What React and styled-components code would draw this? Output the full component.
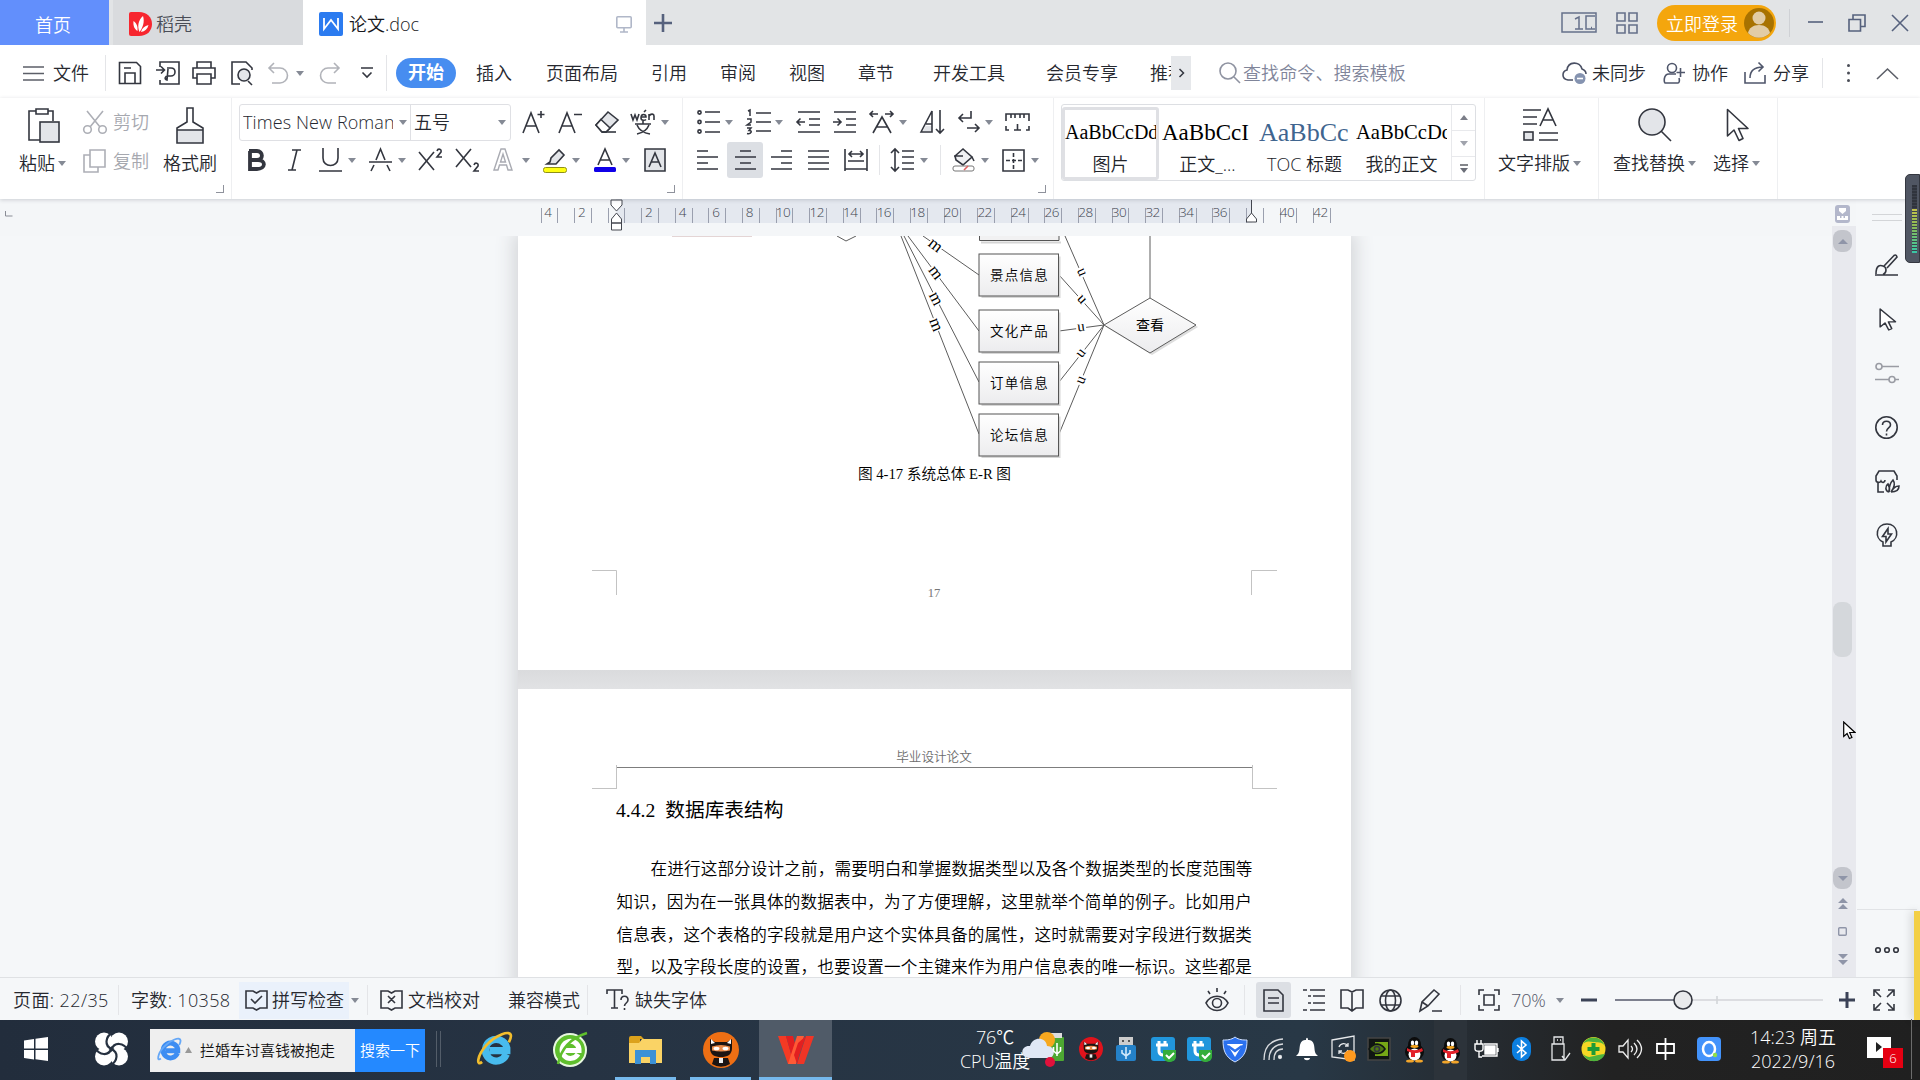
import React from 'react'
import styled, { createGlobalStyle, css } from 'styled-components'

const GlobalStyle = createGlobalStyle`
    * { box-sizing: border-box; }
    body {
        margin: 0;
        overflow: hidden;
        background: #f5f7f9;
        font-family: "Open Sans", "Noto Sans CJK SC", sans-serif;
        font-size: 18px;
        font-weight: 350;
        color: #26282f;
    }
`;

const Screen = styled.div`
    position: relative;
    display: flex;
    flex-direction: column;
    width: 1920px;
    height: 1080px;
    overflow: hidden;
`;

/* line drawing used for every icon */
const Glyph = styled.svg`
    display: block;
    flex: none;
    margin-left: ${p => p.$l || 0}px;
    fill: none;
    stroke: ${p => p.$c || '#33363f'};
    stroke-width: ${p => p.$sw || 1.6};
    overflow: visible;
`;

const Icon = ({ w, h, l, c, sw, children }) => (
    <Glyph width={w} height={h} viewBox={`0 0 ${w} ${h}`} $l={l} $c={c} $sw={sw}>{children}</Glyph>
)

const Caret = styled.i`
    flex: none;
    width: 0;
    height: 0;
    margin-left: ${p => p.$l || 0}px;
    border: 4px solid transparent;
    border-top: 5px solid ${p => p.$c || '#858a95'};
    border-bottom: 0;
`;

const Text = styled.span`
    flex: none;
    width: ${p => p.$w}px;
    margin-left: ${p => p.$l || 0}px;
    font-size: ${p => p.$s || 18}px;
    line-height: 24px;
    white-space: nowrap;
    overflow: ${p => (p.$clip ? 'hidden' : 'visible')};
    color: ${p => p.$c || 'inherit'};
    letter-spacing: ${p => p.$ls || 0}px;
`;

const Rule = styled.i`
    flex: none;
    width: 1px;
    height: ${p => p.$h || 30}px;
    margin-left: ${p => p.$l || 0}px;
    background: ${p => p.$c || '#e4e5e8'};
`;

/* ---------- tab strip ---------- */
const TabBar = styled.header`
    display: flex;
    align-items: center;
    height: 45px;
    flex: none;
    background: #e2e4e6;
`;

const Tab = styled.div`
    display: flex;
    align-items: center;
    flex: none;
    height: 45px;
    width: ${p => p.$w}px;
    margin-left: ${p => p.$l || 0}px;
    padding-left: ${p => p.$p}px;
    padding-top: 3px;
    background: ${p => p.$bg};
    color: ${p => p.$c};
`;

const Login = styled.div`
    display: flex;
    align-items: center;
    width: 119px;
    height: 36px;
    margin-left: 19px;
    padding-left: 9px;
    border-radius: 18px;
    background: #f4a60d;
    color: #fff;
`;

/* ---------- menu ---------- */
const MenuBar = styled.nav`
    display: flex;
    align-items: center;
    flex: none;
    height: 53px;
    padding-top: 3px;
    background: #fff;
`;

const Pill = styled.div`
    flex: none;
    width: 60px;
    height: 30px;
    margin-left: 9px;
    border-radius: 15px;
    background: #478df0;
    color: #fff;
    font-weight: 700;
    line-height: 29px;
    text-align: center;
`;

const More = styled.div`
    display: flex;
    align-items: center;
    justify-content: center;
    flex: none;
    width: 20px;
    height: 34px;
    background: #e6e8eb;
`;

/* ---------- ribbon ---------- */
const Ribbon = styled.section`
    display: flex;
    flex: none;
    height: 101px;
    background: #fff;
    box-shadow: 0 1px 4px rgba(60, 64, 80, 0.22);
    z-index: 1;
`;

const Group = styled.div`
    display: flex;
    position: relative;
    flex: none;
    flex-direction: ${p => (p.$col ? 'column' : 'row')};
    width: ${p => p.$w}px;
    padding-top: 5px;
    border-right: 1px solid #eeeff1;
`;

const Corner = styled.i`
    position: absolute;
    right: 7px;
    bottom: 6px;
    width: 8px;
    height: 8px;
    border: solid #8f929c;
    border-width: 0 1.5px 1.5px 0;
`;

const Stack = styled.div`
    display: flex;
    flex-direction: column;
    flex: none;
    margin-left: ${p => p.$l || 0}px;
    width: ${p => p.$w}px;
`;

const Row = styled.div`
    display: flex;
    align-items: center;
    flex: none;
    height: ${p => p.$h}px;
    padding-left: ${p => p.$p || 0}px;
`;

const FontBox = styled.div`
    display: flex;
    align-items: center;
    flex: none;
    width: 272px;
    height: 37px;
    margin-left: 7px;
    border: 1px solid #dfe0e4;
    border-radius: 3px;
`;

const Active = styled.div`
    display: flex;
    align-items: center;
    justify-content: center;
    flex: none;
    width: ${p => p.$w}px;
    height: 36px;
    margin-left: ${p => p.$l}px;
    border-radius: 3px;
    background: #dcdfe4;
`;

const Gallery = styled.div`
    display: flex;
    width: 415px;
    height: 77px;
    margin-top: 1px;
    margin-left: 7px;
    border: 1px solid #dddfe3;
    border-radius: 3px;
`;

const StyleCard = styled.div`
    flex: none;
    width: 97px;
    height: 73px;
    margin-top: 2px;
    padding-top: 7px;
    text-align: center;
    border: 3px solid ${p => (p.$on ? '#dfe0e4' : 'transparent')};
    border-radius: 3px;
    line-height: 30px;
    color: #22242a;
`;

const Sample = styled.div`
    width: 91px;
    height: 32px;
    overflow: hidden;
    text-align: left;
    white-space: nowrap;
    font-family: "Liberation Serif", serif;
    font-size: ${p => p.$s}px;
    line-height: 31px;
    color: ${p => p.$c || '#000'};
`;

const Spinner = styled.div`
    display: grid;
    grid-template-rows: 25px 26px 1fr;
    place-items: center;
    width: 24px;
    margin-left: auto;
    border-left: 1px solid #e8e9ec;
`;

const SpinCell = styled.div`
    display: grid;
    place-items: center;
    width: 100%;
    height: 100%;
    border-top: ${p => (p.$line ? '1px solid #e8e9ec' : '0')};
`;

const GalleryHold = styled.div`
    display: flex;
    flex: none;
    width: 389px;
`;

/* ---------- ruler ---------- */
const Ruler = styled.div`
    display: flex;
    flex: none;
    height: 37px;
    padding-left: 540.5px;
    padding-top: 9px;
    position: relative;
    background:
        linear-gradient(#e4e8ef, #e4e8ef) 616px 0 / 636px 24px no-repeat,
        #f4f6f8;
`;

const Tick = styled.div`
    display: flex;
    justify-content: center;
    flex: none;
    width: 16.8px;
    height: 15px;
    padding-right: 3px;
    border-left: 1px solid #9a9fae;
    font-size: 13.5px;
    line-height: 9px;
    letter-spacing: -0.5px;
    color: #40444f;
`;

const Stops = styled.svg`
    position: absolute;
    left: 0;
    top: 0;
    fill: #fff;
    stroke: #44474f;
`;

/* ---------- document ---------- */
const Body = styled.main`
    display: flex;
    flex: none;
    height: 741px;
`;

const Canvas = styled.div`
    width: 1832px;
    height: 741px;
    padding-left: 518px;
    overflow: hidden;
    background: #f5f7f9;
`;

const Pages = styled.div`
    width: 833px;
    background: linear-gradient(#dadbdd, #e1e2e4) 0 434px / 100% 19px no-repeat;
    box-shadow: 0 0 18px 4px #d2d4d7;
`;

const Paper = styled.article`
    height: ${p => p.$h}px;
    margin-bottom: 19px;
    background: #fff;
`;

const serif = css`
    font-family: "Liberation Serif", "Noto Sans CJK SC", serif;
`;

const PageHeader = styled.div`
    display: flex;
    justify-content: center;
    align-items: flex-end;
    width: 635px;
    height: 79px;
    margin-left: 98.5px;
    border-bottom: 1.5px solid #7d7d7d;
    padding-bottom: 2px;
    ${serif}
    font-size: 12.6px;
    color: #6d6d6d;
`;

const Crops = styled.div`
    display: flex;
    justify-content: space-between;
    width: 685px;
    height: 24px;
    margin: -3px 0 0 74px;
`;

const Crop = styled.i`
    width: 25px;
    height: 24px;
    border: 0 solid #c3c3c3;
    border-bottom-width: 1px;
    border-right-width: ${p => (p.$r ? 0 : 1)}px;
    border-left-width: ${p => (p.$r ? 1 : 0)}px;
`;

const Heading = styled.h3`
    margin: 8px 0 0 98px;
    ${serif}
    font-size: 19.7px;
    font-weight: 400;
    line-height: 26px;
    color: #000;
    word-spacing: 5px;
`;

const Para = styled.p`
    width: 635px;
    margin: 31px 0 0 98.5px;
    ${serif}
    font-size: 16.6px;
    line-height: 32.8px;
    color: #000;
`;

const Line = styled.span`
    display: block;
    white-space: nowrap;
    text-align: justify;
    text-align-last: justify;
    padding-left: ${p => (p.$indent ? 34 : 0)}px;
    letter-spacing: 0.13px;
`;

/* ---------- right rail ---------- */
const Scroll = styled.div`
    display: flex;
    flex-direction: column;
    align-items: center;
    flex: none;
    width: 24px;
    height: 778px;
    margin-top: -37px;
    padding: 6px 3px 0 0;
    z-index: 0;
    background: linear-gradient(#f4f6f8, #f4f6f8) 0 0 / 24px 27px no-repeat, #e8e9ee;
`;

const Knob = styled.div`
    display: flex;
    align-items: center;
    justify-content: center;
    flex: none;
    width: 19px;
    height: ${p => p.$h}px;
    margin-top: ${p => p.$t}px;
    border-radius: 8px;
    background: ${p => p.$c || '#c3c5cc'};
`;

const Side = styled.aside`
    display: flex;
    flex-direction: column;
    flex: none;
    align-items: center;
    width: 64px;
    height: 778px;
    margin-top: -37px;
    padding-right: 3px;
    background: #f5f7f9;
    z-index: 0;
`;

const SideItem = styled.div`
    display: flex;
    align-items: center;
    justify-content: center;
    flex: none;
    width: 60px;
    height: 54px;
`;

const Grip = styled.div`
    width: 30px;
    height: 7px;
    margin: 15px 0 17px;
    border: solid #d3d5d8;
    border-width: 1.5px 0;
`;

const SideFoot = styled(SideItem)`
    height: 68px;
    margin-top: auto;
    padding-top: 12px;
    border-top: 1px solid #e1e3e6;
`;

const Meter = styled.div`
    position: absolute;
    z-index: 2;
    right: 0;
    top: 174px;
    width: 15px;
    height: 89px;
    padding: 10px 2px 9px 6px;
    border-radius: 5px 0 0 5px;
    border: 1px solid #343740;
    background: #505663;
`;

const Bars = styled.div`
    height: 100%;
    background:
        repeating-linear-gradient(transparent 0 2px, #3c414c 2px 3px),
        linear-gradient(#30343d 0 34%, #c8c34a 34%, #8cba55 60%, #37c6a7);
`;

const Peek = styled.div`
    position: absolute;
    z-index: 2;
    right: 0;
    top: 911px;
    width: 6px;
    height: 109px;
    background: #f3cf45;
    box-shadow: -3px 0 8px rgba(0, 0, 0, 0.15);
`;

const Pointer = styled.svg`
    position: absolute;
    z-index: 3;
    left: 1843px;
    top: 721px;
`;

/* ---------- status bar ---------- */
const Status = styled.footer`
    display: flex;
    align-items: center;
    flex: none;
    height: 43px;
    padding-top: 2px;
    border-top: 1px solid #dfe1e4;
    background: #f5f7f9;
`;

const Check = styled.div`
    display: flex;
    align-items: center;
    flex: none;
    width: 110px;
    height: 37px;
    margin-left: 7px;
    padding-left: 6px;
    background: #eaf1fb;
`;

/* ---------- taskbar ---------- */
const Taskbar = styled.footer`
    display: flex;
    align-items: center;
    flex: none;
    height: 60px;
    padding-bottom: 2px;
    background: linear-gradient(90deg, #222d3c 0, #263343 30%, #283846 68%, #252a2f 78%, #222 84%, #202020);
    color: #fff;
`;

const SearchBox = styled.div`
    display: flex;
    align-items: center;
    flex: none;
    width: 275px;
    height: 43px;
    margin: 2px 0 0 22px;
    padding-left: 8px;
    background: #efefef;
    color: #111;
`;

const Go = styled.div`
    flex: none;
    width: 70px;
    height: 43px;
    margin-left: auto;
    background: #2489ff;
    color: #fff;
    font-size: 15px;
    line-height: 42px;
    text-align: center;
`;

const TaskApp = styled.div`
    display: flex;
    align-items: center;
    justify-content: center;
    flex: none;
    width: ${p => p.$w}px;
    height: 60px;
    margin-left: ${p => p.$l}px;
    margin-bottom: -2px;
    padding-top: ${p => (p.$open ? 2 : 0)}px;
    border-bottom: ${p => (p.$open ? '3px solid #76b9ed' : '0')};
    background: ${p => p.$bg || 'transparent'};
`;

const Two = styled.div`
    flex: none;
    width: ${p => p.$w}px;
    margin-left: ${p => p.$l}px;
    font-size: 18px;
    line-height: 24px;
    text-align: center;
    white-space: nowrap;
    letter-spacing: ${p => p.$ls || 0}px;
`;

const tabs = [
    ['插入', 20, 36], ['页面布局', 34, 72], ['引用', 33, 36], ['审阅', 33, 36], ['视图', 33, 36],
    ['章节', 33, 36], ['开发工具', 39, 72], ['会员专享', 41, 72],
]

const PointerShape = ({ w = 24, h = 34, l, sw }) => (
    <Glyph width={w} height={h} viewBox="0 0 24 34" $l={l} $sw={sw} preserveAspectRatio="none">
        <path d="M1.500 1.500V28l6.500-6 5 10.500 4-2-4.500-10H22z" strokeLinejoin="round" fill="#fff" />
    </Glyph>
)

const TopTabs = () => (
    <TabBar>
        <Tab $w={109} $p={35} $bg="#628ffc" $c="#fff">首页</Tab>
        <Tab $w={190} $l={4} $p={16} $bg="#d9dbde" $c="#4a4d57">
            <Icon w={23} h={24}>
                <path d="M2 0h8c8 0 13 5 13 12s-5 12-13 12H2a2 2 0 0 1-2-2V2a2 2 0 0 1 2-2z" fill="#f7262f" stroke="none" />
                <path d="M10.500 20C8 14 9.500 8 14 4c2 6-.5 12-3.500 16zM8.500 19c-3-2-4.500-5-4-10 3.500 2.500 4.500 6 4 10zM12 20c1-4 3.500-6 7.500-7-1 4-3.500 6.500-7.500 7z" fill="#fff" stroke="none" />
            </Icon>
            <Text $w={36} $l={4}>稻壳</Text>
        </Tab>
        <Tab $w={343} $p={16} $bg="#fff" $c="#17181c">
            <Icon w={24} h={24}>
                <rect width="24" height="24" rx="2" fill="#2b7bf0" stroke="none" />
                <path d="M5 6v11l7-9 7 9V6" stroke="#fff" strokeWidth="1.800" />
            </Icon>
            <Text $w={72} $l={6}>论文.doc</Text>
            <Icon w={16} h={17} l={195} c="#b0b7c8">
                <rect x=".8" y=".8" width="14.400" height="11" rx="1" /><path d="M8 12v4M4 16h8" />
            </Icon>
        </Tab>
        <Icon w={18} h={18} l={8} c="#56617d" sw={2.6}><path d="M9 0v18M0 9h18" /></Icon>
        <Icon w={36} h={21} l={889} c="#66708a" sw={1.5}>
            <path d="M1 1h34v19H1zM34 4h-9v13h9M30 15.500h1M14 7l4-2v12M14 17h8" />
        </Icon>
        <Icon w={22} h={22} l={19} c="#66708a">
            <path d="M1 1h8v8H1zM13 1h8v8h-8zM1 13h8v8H1zM13 13h8v8h-8z" />
        </Icon>
        <Login>
            立即登录
            <Icon w={30} h={30} l={6}>
                <circle cx="15" cy="15" r="15" fill="#a87200" stroke="none" />
                <circle cx="15" cy="10" r="6.500" fill="#e2cca5" stroke="none" />
                <path d="M4 25c1-5 5-8 11-8s10 3 11 8a15 15 0 0 1-22 0z" fill="#e2cca5" stroke="none" />
            </Icon>
        </Login>
        <Rule $h={28} $l={13} $c="#cfd1d5" />
        <Icon w={15} h={18} l={18} c="#56617d"><path d="M0 8h15" /></Icon>
        <Icon w={18} h={18} l={25} c="#56617d"><path d="M1 5.500h11.500V17H1zM5 5V1h12v11.500h-4" /></Icon>
        <Icon w={16} h={16} l={26} c="#56617d"><path d="M0 0l16 16M16 0L0 16" /></Icon>
    </TabBar>
)

const Menu = () => (
    <MenuBar>
        <Icon w={21} h={15} l={23} c="#5c5f68"><path d="M0 1h21M0 7.500h21M0 14h21" /></Icon>
        <Text $w={36} $l={9}>文件</Text>
        <Rule $h={36} $l={16} />
        <Icon w={24} h={24} l={12}>
            <path d="M1.500 1.500h17l4 4v17h-21zM7 22v-10h10v10M6 7h7" />
        </Icon>
        <Icon w={24} h={24} l={14}>
            <path d="M4 6V1h19v22H4v-4M0 9h8M5 5.500L8.500 9 5 12.500M11 7h4c3 0 4 1.500 4 4s-2 4-4 4h-3c-3 0-4 3-1 4l1-11" />
        </Icon>
        <Icon w={24} h={24} l={12}>
            <path d="M5 7V1h14v6M5 17H1V7h22v10h-4M5 13h14v10H5z" />
        </Icon>
        <Icon w={24} h={24} l={15}>
            <path d="M9 23H1V1h14l6 6v2M17 20l4 4" /><circle cx="13" cy="14" r="6" fill="#e3e5e9" />
        </Icon>
        <Icon w={20} h={22} l={13} c="#b1b3b9"><path d="M6 1L1 6l5 5M1 6h11a7.500 7.500 0 0 1 0 15H4" /></Icon>
        <Caret $l={8} />
        <Icon w={20} h={22} l={16} c="#b1b3b9"><path d="M14 1l5 5-5 5M19 6H8a7.500 7.500 0 0 0 0 15h8" /></Icon>
        <Icon w={12} h={12} l={21}><path d="M0 1h12M1.500 5.500L6 10l4.500-4.500" /></Icon>
        <Rule $h={36} $l={13} />
        <Pill>开始</Pill>
        {tabs.map(([name, l, w]) => <Text key={name} $l={l} $w={w}>{name}</Text>)}
        <Text $l={32} $w={21} $clip>推荐</Text>
        <More><Icon w={5} h={8} sw={1.5}><path d="M.5 0l4 4-4 4" /></Icon></More>
        <Icon w={22} h={22} l={28} c="#8f93a1"><circle cx="9" cy="9" r="8" /><path d="M15 15l6 6" /></Icon>
        <Text $w={163} $l={2} $ls={0.1} $c="#80859a">查找命令、搜索模板</Text>
        <Icon w={25} h={22} l={156} c="#4a5064">
            <path d="M11 18H6C-1 17 0 9 5 8 6-1 18-1 20 7c3 1 4 3 4 5" />
            <circle cx="18" cy="16.500" r="5.500" fill="#8593b0" stroke="none" /><path d="M15 16.500h6" stroke="#fff" />
        </Icon>
        <Text $w={54} $l={5}>未同步</Text>
        <Icon w={22} h={22} l={17} c="#4f566b">
            <circle cx="9" cy="6" r="4.500" /><path d="M13 12H6c-6 0-5 9-4 9h13c1 0 2-2 1-5M17.500 6v9M13.500 10.500H22" />
        </Icon>
        <Text $w={36} $l={7}>协作</Text>
        <Icon w={22} h={22} l={16} c="#4f566b">
            <path d="M1 10v11h20v-8M6 16c0-7 4-11 13-11M14.500.5L19 5l-4.500 4.500" />
        </Icon>
        <Text $w={36} $l={7}>分享</Text>
        <Rule $l={13} />
        <Icon w={3} h={18} l={24}>
            <g fill="#4a4d57" stroke="none"><circle cx="1.500" cy="1.500" r="1.500" /><circle cx="1.500" cy="9" r="1.500" /><circle cx="1.500" cy="16.500" r="1.500" /></g>
        </Icon>
        <Icon w={21} h={11} l={27} c="#5c5f68"><path d="M0 11L10.500 1 21 11" /></Icon>
    </MenuBar>
)

const FontRows = () => (
    <>
        <Row $h={38}>
            <FontBox>
                <Text $w={150} $l={3} $ls={0.1} $clip>Times New Roman</Text>
                <Caret $l={6} />
                <Rule $h={35} $l={3} $c="#dfe0e4" />
                <Text $w={36} $l={3}>五号</Text>
                <Caret $l={48} />
            </FontBox>
            <Icon w={24} h={24} l={11}><path d="M1 23L9 3l8 20M4 16h10M19 1v7M15.500 4.500h7" /></Icon>
            <Icon w={24} h={24} l={12}><path d="M1 23L9 3l8 20M4 16h10M16 4.500h8" /></Icon>
            <Icon w={24} h={24} l={13}>
                <path d="M1 15L13 2l10 8L11 22H7z" fill="#e3e5e9" /><path d="M6 9.500l9 8.500-4 4H7l-6-7z" fill="#fff" /><path d="M7 22h14" />
            </Icon>
            <Icon w={24} h={26} l={12}>
                <path d="M0 5l2 6 2-5 2 5 2-6M10 8h5c0-3-5-4-5 1 0 3 4 2.500 5 1.500M13 3l2-2M18 5v6M18 7c2-3 5-2 5 0v4M4 15h16M12 12v3M18 16c-2 5-7 8-12 9M6 16c2 5 7 8 13 9" />
            </Icon>
            <Caret $l={6} />
        </Row>
        <Row $h={38} $p={16}>
            <Icon w={18} h={22} sw={3.8}><path d="M2 2v18h7c9 0 9-9 1-9H3M9 11c7 0 6-9 0-9H1" /></Icon>
            <Icon w={13} h={22} l={22}><path d="M4 1h9M0 21h8M9 1L4 21" /></Icon>
            <Icon w={23} h={24} l={18}><path d="M4 0v10c0 10 15 10 15 0V0M0 23h23" /></Icon>
            <Caret $l={6} />
            <Icon w={23} h={24} l={13}><path d="M7 12l4.500-11L16 12M0 14h23M5 17l-3 6M18 17l3 6" /></Icon>
            <Caret $l={6} />
            <Icon w={25} h={24} l={12}><path d="M1 4l15 18M16 4L1 22M19 3c1-3 5-2 4 1l-4 5h5" /></Icon>
            <Icon w={25} h={24} l={12}><path d="M1 1l15 18M16 1L1 19M19 17c1-3 5-2 4 1l-4 5h5" /></Icon>
            <Icon w={21} h={24} l={13} c="#a9abb2" sw={1.4}><path d="M1 22L8 1h4l7 21h-4l-1.500-5h-7L5 22zM7.500 14h5l-2.500-8z" /></Icon>
            <Caret $l={8} />
            <Icon w={24} h={25} l={13}>
                <path d="M7 14l1-4 8-8 5 5-8 9H4l3-2z" fill="#e3e5e9" />
                <rect x=".5" y="19.500" width="23" height="5" rx="2" fill="#ffff12" stroke="#8f9018" strokeWidth="1" />
            </Icon>
            <Caret $l={5} />
            <Icon w={22} h={25} l={14}>
                <path d="M4 17L11 1l7 16M6.500 12h9" /><rect x="0" y="19" width="22" height="5" rx="1.500" fill="#1000e8" stroke="none" />
            </Icon>
            <Caret $l={6} />
            <Icon w={22} h={24} l={14}>
                <path d="M1 1h20v22H1z" fill="#e3e5e9" /><path d="M5 19l6-14 6 14M7 14h8" />
            </Icon>
        </Row>
    </>
)

const ParaRows = () => (
    <>
        <Row $h={38} $p={14}>
            <Icon w={23} h={24}>
                <path d="M8 2h15M8 12h15M8 22h15" /><circle cx="2.500" cy="2.500" r="1.600" /><circle cx="2.500" cy="12" r="1.600" /><circle cx="2.500" cy="21.500" r="1.600" />
            </Icon>
            <Caret $l={5} />
            <Icon w={24} h={24} l={14}>
                <path d="M9 3h15M9 12h15M9 21h15M1 1l2-1v6M0 9h4v3l-4 3h4M0 18h4l-2 2.500c4 0 2 4-2 3" strokeWidth="1.500" />
            </Icon>
            <Caret $l={4} />
            <Icon w={24} h={22} l={13}><path d="M2 1h22M13 8h11M13 14h11M2 21h22M9 11H1M4.500 7.500L1 11l3.500 3.500" /></Icon>
            <Icon w={24} h={22} l={13}><path d="M1 1h22M13 8h10M13 14h10M1 21h22M0 11h8M4.500 7.500L8 11l-3.500 3.500" /></Icon>
            <Icon w={25} h={24} l={12}>
                <path d="M4 23l9-16 9 16M7 17h12M1 4h8M4 1L1 4l3 3M16 4h8M21 1l3 3-3 3" />
            </Icon>
            <Caret $l={5} />
            <Icon w={24} h={25} l={13}><path d="M3 21l2.500-5H12v5z" fill="#e3e5e9" stroke="none" /><path d="M1 22L12 1v21zM6 14h6M20 0v23M16 19l4 4 4-4" /></Icon>
            <Icon w={22} h={22} l={14}><path d="M13 0v7H1M5 3L1 7l4 4M9 17h12M17 13l4 4-4 4" /></Icon>
            <Caret $l={5} />
            <Icon w={25} h={18} l={12}>
                <path d="M1 8V1h23v7M6 1v4M10 1v4M15 1v4M19 1v4M1 13v4h3M24 13v4h-3M9 17h7M12.500 11v6" />
            </Icon>
        </Row>
        <Row $h={38} $p={14}>
            <Icon w={21} h={20}><path d="M0 1h11M0 7h21M0 13h11M0 19h21" /></Icon>
            <Active $w={36} $l={9}><Icon w={21} h={20}><path d="M5 1h11M0 7h21M5 13h11M0 19h21" /></Icon></Active>
            <Icon w={21} h={20} l={8}><path d="M10 1h11M0 7h21M10 13h11M0 19h21" /></Icon>
            <Icon w={21} h={20} l={16}><path d="M0 1h21M0 7h21M0 13h21M0 19h21" /></Icon>
            <Icon w={24} h={22} l={15}><path d="M1 0v22M23 0v22M4 12h16M1 20h22M5 5h14M8 2L5 5l3 3M16 2l3 3-3 3" /></Icon>
            <Rule $l={11} />
            <Icon w={23} h={24} l={11}><path d="M4 1v22M0 5l4-4 4 4M0 19l4 4 4-4M11 3h12M11 9h12M11 15h12M11 21h12" /></Icon>
            <Caret $l={6} />
            <Rule $l={12} />
            <Icon w={24} h={24} l={11}>
                <path d="M3 8L11 1l9 8-9 8-7-5zM2 8h9" fill="#f0f1f3" /><path d="M20 9l2 4" />
                <rect x="1" y="18" width="21" height="5" rx="2" strokeWidth="1" stroke="#777" /><path d="M12 22l4-4" stroke="#e06060" />
            </Icon>
            <Caret $l={5} />
            <Icon w={23} h={23} l={13}><path d="M1 1h21v21H1z" /><path d="M11.500 4v16M4 11.500h16" strokeDasharray="4 2" /></Icon>
            <Caret $l={6} />
        </Row>
    </>
)

const RibbonBar = () => (
    <Ribbon>
        <Group $w={232}>
            <Stack $l={19} $w={48}>
                <Row $h={44} $p={9}>
                    <Icon w={32} h={35}>
                        <path d="M8 3H1v29h11M20 3h5v10M8 1h12v5H8z" /><rect x="12" y="14" width="19" height="20" fill="#e3e5e9" />
                    </Icon>
                </Row>
                <Row $h={32}><Text $w={36}>粘贴</Text><Caret $l={3} /></Row>
            </Stack>
            <Stack $l={16} $w={66}>
                <Row $h={38}>
                    <Icon w={24} h={23} c="#adafb6"><circle cx="4.500" cy="18.500" r="3.800" /><circle cx="19.500" cy="18.500" r="3.800" /><path d="M4 0l13 16M20 0L7 16" /></Icon>
                    <Text $w={36} $l={6} $c="#a6a8af">剪切</Text>
                </Row>
                <Row $h={40}>
                    <Icon w={23} h={24} c="#adafb6"><path d="M7 1h15v17H7zM7 6H1v17h14v-5" /></Icon>
                    <Text $w={36} $l={7} $c="#a6a8af">复制</Text>
                </Row>
            </Stack>
            <Stack $l={14} $w={56}>
                <Row $h={44} $p={13}>
                    <Icon w={28} h={37}>
                        <rect x="1" y="23" width="26" height="13" fill="#e3e5e9" stroke="none" />
                        <path d="M11 1h6v14l10 6v15H1V21l10-6zM1 23h26" />
                    </Icon>
                </Row>
                <Row $h={32}><Text $w={54}>格式刷</Text></Row>
            </Stack>
            <Corner />
        </Group>
        <Group $w={451} $col><FontRows /><Corner /></Group>
        <Group $w={371} $col><ParaRows /><Corner /></Group>
        <Group $w={431}>
            <Gallery>
                <GalleryHold>
                    <StyleCard $on><Sample $s={20}>AaBbCcDd</Sample>图片</StyleCard>
                    <StyleCard><Sample $s={23}>AaBbCcI</Sample>正文_...</StyleCard>
                    <StyleCard><Sample $s={26} $c="#40658f">AaBbCc</Sample>TOC 标题</StyleCard>
                    <StyleCard><Sample $s={20.6}>AaBbCcDd</Sample>我的正文</StyleCard>
                </GalleryHold>
                <Spinner>
                    <SpinCell><Icon w={8} h={5}><path d="M0 5l4-5 4 5z" fill="#7b7e88" stroke="none" /></Icon></SpinCell>
                    <SpinCell $line><Icon w={8} h={5}><path d="M0 0l4 5 4-5z" fill="#a0a3ac" stroke="none" /></Icon></SpinCell>
                    <SpinCell $line><Icon w={8} h={9} sw={1.2}><path d="M0 1h8" /><path d="M0 4l4 5 4-5z" fill="#6b6e78" stroke="none" /></Icon></SpinCell>
                </Spinner>
            </Gallery>
        </Group>
        <Group $w={114}>
            <Stack $l={13} $w={86}>
                <Row $h={44} $p={25}>
                    <Icon w={35} h={34}>
                        <path d="M0 2h18M0 9h14M0 16h14M17 18l8-17 8 17M20 12h10M16 25h19M16 32h19" /><rect x="1" y="24" width="9" height="8" fill="#e3e5e9" />
                    </Icon>
                </Row>
                <Row $h={32}><Text $w={72}>文字排版</Text><Caret $l={3} /></Row>
            </Stack>
        </Group>
        <Group $w={179}>
            <Stack $l={14} $w={100}>
                <Row $h={44} $p={25}>
                    <Icon w={34} h={34}><circle cx="14" cy="14" r="13" fill="#e3e5e9" /><path d="M23 23l10 10" /></Icon>
                </Row>
                <Row $h={32}><Text $w={72}>查找替换</Text><Caret $l={3} /></Row>
            </Stack>
            <Stack $w={60}>
                <Row $h={44} $p={13}><PointerShape /></Row>
                <Row $h={32}><Text $w={36}>选择</Text><Caret $l={3} /></Row>
            </Stack>
        </Group>
    </Ribbon>
)

const RulerBar = () => (
    <Ruler>
        {[...Array(48)].map((_, i) => {
            const n = i - 4
            const shown = n % 2 === 0 && n !== 0 && n !== 38
            return <Tick key={n}>{shown ? Math.abs(n) : ''}</Tick>
        })}
        <Stops width="1300" height="37">
            <path d="M611 1h11v5l-5.500 6-5.500-6zM616.500 14l5 6v4h-10v-4zM611.500 24h10v7h-10zM1251.500 1v13l5 6v3h-10v-3l5-6" />
            <path d="M5.500 12v5h7" fill="none" stroke="#8a8d96" />
        </Stops>
    </Ruler>
)

const boxes = [['景点信息', 254.5], ['文化产品', 310.5], ['订单信息', 362.5], ['论坛信息', 414.5]]
const many = [[923, 979, 275, 935, 246, 38], [908, 979, 331, 935, 273, 53], [904, 979, 382, 935, 299, 63], [901, 979, 434, 935, 325, 69]]
const uses = [[1065, 236, 1082, 272, 66], [1059, 275, 1082, 299, 48], [1059, 331, 1081, 327, -7], [1059, 382, 1081, 353, -52], [1059, 434, 1081, 380, -68]]

const Diagram = () => (
    <svg width="833" height="434" viewBox="518 236 833 434" fontFamily='"Liberation Serif", "Noto Sans CJK SC", serif' textAnchor="middle">
        <defs>
            <linearGradient id="face" x2="0" y2="1"><stop offset="0" stopColor="#fff" /><stop offset="1" stopColor="#ececee" /></linearGradient>
        </defs>
        <path d="M672 236.500h80" stroke="#e4d5d5" />
        <g fill="none" stroke="#5c5c5c">
            <path d="M837 236l9 5 10-5M1150 236v62" />
            {many.map(m => <path key={m[2]} d={`M${m[0]} 236L${m[1]} ${m[2]}`} />)}
            {uses.map(u => <path key={u[1]} d={`M${u[0]} ${u[1]}L1104 325`} />)}
        </g>
        {many.map(m => (
            <g key={m[2]} transform={`translate(${m[3]} ${m[4]}) rotate(${m[5]})`}>
                <rect x="-7" y="-4" width="14" height="8" fill="#fff" /><text y="4" fontSize="17">m</text>
            </g>
        ))}
        {uses.map(u => (
            <g key={u[1]} transform={`translate(${u[2]} ${u[3]}) rotate(${u[4]})`}>
                <rect x="-5" y="-4" width="10" height="8" fill="#fff" /><text y="4" fontSize="15">u</text>
            </g>
        ))}
        <path d="M981 242.500h80" stroke="#d5d5d5" strokeWidth="2" />
        <path d="M979.500 236v4.500h79.500V236" fill="#f1f1f2" stroke="#555" />
        {boxes.map(([name, y]) => (
            <g key={name}>
                <rect x="981.500" y={y + 2} width="79" height="41.500" fill="#d6d6d6" />
                <rect x="979" y={y - 0.5} width="79.500" height="42" fill="url(#face)" stroke="#555" />
                <text x="1019.500" y={y + 25.5} fontSize="13.500" letterSpacing="1.200">{name}</text>
            </g>
        ))}
        <path d="M1106 327l46-27 46 27-46 28z" fill="#dedede" />
        <path d="M1104 325l46-27 46 27-46 28z" fill="url(#face)" stroke="#5c5c5c" />
        <text x="1150" y="330" fontSize="14" fontWeight="400">查看</text>
        <text x="934.500" y="478.500" fontSize="14.700" textLength="153">图 4-17 系统总体 E-R 图</text>
        <path d="M592 570.500h24.500V595M1277 570.500h-25.500V595" fill="none" stroke="#c3c3c3" />
        <text x="934" y="596.500" fontSize="12.600" fill="#777">17</text>
    </svg>
)

const DocArea = () => (
    <Canvas>
        <Pages>
            <Paper $h={434}><Diagram /></Paper>
            <Paper $h={500}>
                <PageHeader>毕业设计论文</PageHeader>
                <Crops><Crop /><Crop $r /></Crops>
                <Heading>4.4.2 数据库表结构</Heading>
                <Para>
                    <Line $indent>在进行这部分设计之前，需要明白和掌握数据类型以及各个数据类型的长度范围等</Line>
                    <Line>知识，因为在一张具体的数据表中，为了方便理解，这里就举个简单的例子。比如用户</Line>
                    <Line>信息表，这个表格的字段就是用户这个实体具备的属性，这时就需要对字段进行数据类</Line>
                    <Line>型，以及字段长度的设置，也要设置一个主键来作为用户信息表的唯一标识。这些都是</Line>
                </Para>
            </Paper>
        </Pages>
    </Canvas>
)

const ScrollBar = () => (
    <Scroll>
        <Icon w={15} h={18}>
            <rect width="15" height="18" rx="3" fill="#b3b7cb" stroke="none" />
            <path d="M4 3h7v3L7.500 9 4 6zM2 11h3v2h1.500v-2h2v2H10v-2h3v4H2z" fill="#fff" stroke="none" />
        </Icon>
        <Knob $h={22} $t={7}><Icon w={10} h={5}><path d="M0 5l5-5 5 5z" fill="#8f95a8" stroke="none" /></Icon></Knob>
        <Knob $h={55} $t={350} $c="#d4d7db" />
        <Knob $h={22} $t={210}><Icon w={10} h={5}><path d="M0 0l5 5 5-5z" fill="#8f95a8" stroke="none" /></Icon></Knob>
        <Knob $h={11} $t={9} $c="none"><Icon w={10} h={11}><path d="M0 5l5-5 5 5zM0 11l5-5 5 5z" fill="#8f95a8" stroke="none" /></Icon></Knob>
        <Knob $h={9} $t={18} $c="none"><Icon w={9} h={9} c="#8f95a8" sw={1.4}><rect x=".7" y=".7" width="7.600" height="7.600" rx="1" /></Icon></Knob>
        <Knob $h={11} $t={18} $c="none"><Icon w={10} h={11}><path d="M0 0l5 5 5-5zM0 6l5 5 5-5z" fill="#8f95a8" stroke="none" /></Icon></Knob>
    </Scroll>
)

const SideBar = () => (
    <Side>
        <Grip />
        <SideItem><Icon w={23} h={22}><path d="M9 12L19 1.500Q21 0 22 3l-10 11M1 20c0-9 4-9 7-8 4 1 4 7 0 8.500M0 21h23" /></Icon></SideItem>
        <SideItem><PointerShape w={18} h={23} l={3} sw={2} /></SideItem>
        <SideItem><Icon w={24} h={18} c="#9a9ca4"><circle cx="4" cy="2.500" r="3" /><path d="M7 2.500h17M0 15.500h14M20 15.500h4" /><circle cx="17" cy="15.500" r="3" /></Icon></SideItem>
        <SideItem><Icon w={23} h={23}><circle cx="11.500" cy="11.500" r="10.700" /><path d="M7.500 9c0-5 8-5 8 0 0 3-4 3-4 6.500M11.500 17.500v2" /></Icon></SideItem>
        <SideItem>
            <Icon w={24} h={23}>
                <path d="M3 12v10h6M1 10c0 3 4 3 5 1 1 2 4 2 4-1M1 10V6l3-5h15l3 5v4M14 22c-4-1-4-6-1-8 1.500 2.500 2 5 1 8 0-5 1-9 4-12 3 4 1 8-2 12 2-4 4-6 8-6 0 4-3 6-8 6" />
            </Icon>
        </SideItem>
        <SideItem><Icon w={22} h={24}><path d="M7 23v-4c-9-4-7-18 4-18s13 14 4 18v4zM12 5.500l-5.500 8H10v5.500l5.500-8H12z" /></Icon></SideItem>
        <SideFoot><Icon w={24} h={6}><circle cx="3" cy="3" r="2.300" /><circle cx="12" cy="3" r="2.300" /><circle cx="21" cy="3" r="2.300" /></Icon></SideFoot>
    </Side>
)

const StatusBar = () => (
    <Status>
        <Text $w={97} $l={13} $ls={0.4}>页面: 22/35</Text>
        <Rule $l={8} />
        <Text $w={101} $l={12} $ls={0.35}>字数: 10358</Text>
        <Check>
            <Icon w={23} h={21}><path d="M1 1h7l3.500 2L15 1h7v17h-7l-3.500 2L8 18H1zM6 9l4 4 7-7" /></Icon>
            <Text $w={72} $l={4}>拼写检查</Text>
        </Check>
        <Caret $l={2} />
        <Rule $l={8} />
        <Icon w={23} h={21} l={12}><path d="M1 1h7l3.500 2L15 1h7v17h-7l-3.500 2L8 18H1zM8 6l7 7M15 6l-7 7" /></Icon>
        <Text $w={72} $l={5}>文档校对</Text>
        <Text $w={72} $l={28}>兼容模式</Text>
        <Rule $l={7} />
        <Icon w={24} h={22} l={18}><path d="M1 5V1h15v4M8.500 1v18M5 19h7M15 11c0-5 7-5 7 0 0 3-3.500 3-3.500 6M18.500 19v2" /></Icon>
        <Text $w={72} $l={5}>缺失字体</Text>
        <Icon w={24} h={24} l={498}><path d="M1 15c5-9 17-9 22 0-5 10-17 10-22 0zM12 0v4M3 3l2 3M21 3l-2 3" /><circle cx="12" cy="15" r="4.500" /></Icon>
        <Rule $l={15} />
        <Active $w={35} $l={11}><Icon w={21} h={23}><path d="M1 1h14l5 5v16H1zM5 9h11M5 14h11" /></Icon></Active>
        <Icon w={22} h={22} l={12}><path d="M0 1h4M7 1h15M5 7h3M10 7h12M5 14h3M10 14h12M0 21h4M7 21h15" /></Icon>
        <Icon w={24} h={23} l={15}><path d="M1 1h7l4 2 4-2h7v18h-7l-4 3-4-3H1zM12 3v18" /></Icon>
        <Icon w={23} h={23} l={15}><circle cx="11.500" cy="11.500" r="10.500" /><ellipse cx="11.500" cy="11.500" rx="5" ry="10.500" /><path d="M2 7h19M2 16h19" /></Icon>
        <Icon w={24} h={23} l={17}><path d="M1 22l2-9L15 1l5 4L9 17zM3 13l6 4M13 22h10" /></Icon>
        <Rule $l={17} />
        <Icon w={22} h={22} l={17}><path d="M1 6V1h5M16 1h5v5M21 16v5h-5M6 21H1v-5M6 6h10v10H6z" /></Icon>
        <Text $w={40} $l={11} $ls={-0.1} $c="#55596a">70%</Text>
        <Caret $l={5} />
        <Icon w={16} h={4} l={17} c="#3b4257" sw={3}><path d="M0 2h16" /></Icon>
        <Icon w={208} h={20} l={18}>
            <path d="M0 10h60" stroke="#55596a" /><path d="M76 10h132M102 6v8" stroke="#d3d5d9" />
            <circle cx="68" cy="10" r="9" fill="#e8e9eb" />
        </Icon>
        <Icon w={16} h={16} l={16} c="#3b4257" sw={3}><path d="M8 0v16M0 8h16" /></Icon>
        <Icon w={22} h={22} l={18}><path d="M1 7V1h6M1 1l7 7M15 1h6v6M21 1l-7 7M21 15v6h-6M21 21l-7-7M7 21H1v-6M1 21l7-7" /></Icon>
    </Status>
)

const Explorer = ({ w, l, c, ring }) => (
    <Glyph width={w} height={w} viewBox="0 0 34 34" $l={l}>
        <path d="M27.500 21.500A10.500 10.500 0 1 1 28 15.500v2.500H11" stroke={c} strokeWidth="7" />
        <path d="M4 29C-2 34-1 23 8 13S32-3 32 4c0 2-1 4-2 6" stroke={ring} strokeWidth="2.600" />
    </Glyph>
)

const Ninja = ({ w, l, c }) => (
    <Glyph width={w} height={w} viewBox="0 0 36 36" $l={l}>
        <circle cx="18" cy="18" r="18" fill={c} stroke="none" />
        <g stroke="none">
            <path d="M7 16V7l5 3h12l5-3v9c0 7-5 9-11 9S7 23 7 16zM11 26h14l2 6a17 17 0 0 1-18 0z" fill="#1c1513" />
            <path d="M8 7l4 4-4 1zM28 7l-4 4 4 1z" fill="#fff" />
            <path d="M9 14.500q9-3 18 0v4q-9 2-18 0z" fill="#e98c4c" /><ellipse cx="13.500" cy="16.500" rx="3" ry="1.800" fill="#fff" /><ellipse cx="22.500" cy="16.500" rx="3" ry="1.800" fill="#fff" />
            <path d="M16 26h4v5h-4z" fill="#eee" />
        </g>
    </Glyph>
)

const Penguin = ({ l }) => (
    <Icon w={21} h={25} l={l}>
        <g stroke="none">
            <ellipse cx="10.500" cy="15" rx="9.500" ry="8.500" fill="#0c0c0c" /><ellipse cx="10.500" cy="8" rx="6.500" ry="8" fill="#0c0c0c" />
            <ellipse cx="10.500" cy="17.500" rx="6" ry="6" fill="#fff" />
            <ellipse cx="8.500" cy="6" rx="1.700" ry="2.400" fill="#fff" /><ellipse cx="12.500" cy="6" rx="1.700" ry="2.400" fill="#fff" />
            <ellipse cx="10.500" cy="9.500" rx="4" ry="1.400" fill="#f6a41c" />
            <path d="M3 11c5 3 10 3 15 0l1 3c-3 1.500-5 2-8 2v4H7v-4.500L3 14z" fill="#e3222b" />
            <ellipse cx="6" cy="24" rx="4" ry="1.600" fill="#f2a52a" /><ellipse cx="15" cy="24" rx="4" ry="1.600" fill="#f2a52a" />
        </g>
    </Icon>
)

const Guard = ({ l }) => (
    <Icon w={25} h={25} l={l}>
        <rect width="24" height="24" rx="3" fill="#2196dc" stroke="none" />
        <path d="M8 4v3M14 4v3M8 8v6c0 5 7 5 8 2M5 8h12" stroke="#fff" strokeWidth="3" />
        <path d="M12 13h13v7c0 3-4 5-6.500 5S12 23 12 20z" fill="#35ad3b" stroke="none" /><path d="M15 18l3 3 5-5" stroke="#fff" strokeWidth="2" />
    </Icon>
)

const TaskBar = () => (
    <Taskbar>
        <Icon w={24} h={24} l={24}>
            <path d="M0 3.500L10 2v9.500H0zM11.500 1.800L24 0v11.500H11.500zM0 13h10v9.500L0 21zM11.500 13H24v11l-12.500-1.800z" fill="#fff" stroke="none" />
        </Icon>
        <Icon w={33} h={34} l={47}>
            <g fill="#fff" stroke="none">
                <circle cx="9" cy="9.500" r="9" /><circle cx="24" cy="9.500" r="9" /><circle cx="24" cy="24.500" r="9" /><circle cx="9" cy="24.500" r="9" />
            </g>
            {[0, 90, 180, 270].map(a => (
                <path key={a} transform={`rotate(${a} 16.500 17)`} d="M17 17C9 14 10 5 18 0" stroke="#263140" strokeWidth="2.200" />
            ))}
        </Icon>
        <SearchBox>
            <Explorer w={24} c="#3d8df2" ring="#66a8f7" />
            <Icon w={7} h={6} l={3}><path d="M0 6l3.500-6L7 6z" fill="#999" stroke="none" /></Icon>
            <Text $w={135} $l={8} $s={15}>拦婚车讨喜钱被抱走</Text>
            <Go>搜索一下</Go>
        </SearchBox>
        <Rule $h={36} $l={11} $c="#535d69" />
        <Rule $h={36} $l={3} $c="#535d69" />
        <Explorer w={35} l={37} c="#48bbee" ring="#f2bd2d" />
        <Icon w={35} h={35} l={40}>
            <circle cx="17" cy="18" r="16" fill="#5fbf2d" stroke="#e8f8df" strokeWidth="2" />
            <path d="M25 22A8.500 8.500 0 1 1 26 17v1.500H11" stroke="#fff" strokeWidth="5" /><path d="M5 32C8 17 18 6 34 1" stroke="#5fbf2d" strokeWidth="2.500" />
        </Icon>
        <TaskApp $w={61} $l={27} $open>
            <Icon w={33} h={28}>
                <g stroke="none">
                    <path d="M0 2q0-2 2-2h10l3 3h-4v5H0z" fill="#dca21c" /><path d="M0 7h10l3-4h20v24H0z" fill="#fad365" />
                    <path d="M6 28V14h21v14h-6v-7h-9v7z" fill="#3c91d6" />
                </g>
            </Icon>
        </TaskApp>
        <TaskApp $w={61} $l={14} $open><Ninja w={36} c="#ee6f14" /></TaskApp>
        <TaskApp $w={73} $l={8} $open $bg="#505b68">
            <Icon w={36} h={29}>
                <g stroke="none">
                    <path d="M0 1h8l8 28h-6z" fill="#f43a24" /><path d="M8 1h7l4 15-4 10z" fill="#e31f20" />
                    <path d="M19 1h7l-8 28h-8z" fill="#ff5a35" /><path d="M28 1h8l-10 28h-7z" fill="#f03526" /><path d="M28 1l-7 20-2 8-3-9 4-12z" fill="#e31f20" />
                </g>
            </Icon>
        </TaskApp>
        <Two $w={72} $l={127} $ls={-0.1}>76℃<br />CPU温度</Two>
        <Icon w={44} h={36} l={-9}>
            <g stroke="none">
                <rect x="27" y="6" width="15" height="24" rx="1" fill="#4da832" /><path d="M29 2h11v5H29z" fill="#ddd" />
                <circle cx="25" cy="9" r="8" fill="#f7a81f" />
                <path d="M7 27c-10-1-8-13 1-12C11 5 24 6 25 15c9 0 9 12 1 12z" fill="#dfe7f5" /><circle cx="28" cy="31" r="5" fill="#e0113b" />
            </g>
            <path d="M35 12v13M31.500 16v4l3.500 3 3.500-3v-4" stroke="#fff" />
        </Icon>
        <Ninja w={24} l={13} c="#e0131c" />
        <Icon w={20} h={24} l={13}>
            <path d="M3 0h14v8H3z" fill="#ccc" stroke="none" /><path d="M6 3h2v2H6zM12 3h2v2h-2z" fill="#555" stroke="none" />
            <rect y="8" width="20" height="16" rx="2" fill="#2481c8" stroke="none" /><path d="M10 10v12M6 13v3l4 3 4-3v-3" stroke="#cfe8fb" />
        </Icon>
        <Guard l={15} /><Guard l={11} />
        <Icon w={24} h={25} l={11}>
            <path d="M12 0c4 3 8 3 12 3 0 10-2 17-12 22C2 20 0 13 0 3c4 0 8 0 12-3z" fill="#2b71ef" stroke="#cfe0ff" strokeWidth="1" />
            <path d="M4 7h16l-8 13z" fill="#fff" stroke="none" /><path d="M5 9l7 5 7-5" stroke="#2b71ef" strokeWidth="2.500" />
        </Icon>
        <Icon w={20} h={22} l={16} c="#d8dbdf" sw={1.3}><path d="M1 22C1 9 8 2 20 1M6 22C6 13 10 7 20 6M11 22c0-7 3-11 9-11" /><circle cx="17" cy="19" r="1.500" fill="#fff" /></Icon>
        <Icon w={22} h={22} l={13}><path d="M0 18c4-3 3-6 4-11 1-4 3-5 6-5 0-3 2-3 2 0 3 0 5 1 6 5 1 5 0 8 4 11zM8 20h6c0 3-6 3-6 0z" fill="#fff" stroke="none" /></Icon>
        <Icon w={25} h={26} l={13} c="#e6e8ea" sw={1.3}>
            <path d="M1 4l22-4v24L1 21zM8 11a5 5 0 0 1 9-1M17 7v3h-3M17 14a5 5 0 0 1-9 1M8 18v-3h3" /><circle cx="19" cy="20" r="6" fill="#ff9a1f" stroke="none" />
        </Icon>
        <Icon w={24} h={24} l={11}>
            <path d="M1 1h22v22H1z" fill="#101513" stroke="#444" /><path d="M8 5h13v14H8z" fill="#76a716" stroke="none" />
            <path d="M2 12c5-7 12-6 16 0-4 6-12 6-16 0z" fill="#4f7a12" stroke="#101513" /><circle cx="10" cy="12" r="2.500" />
        </Icon>
        <Penguin l={13} />
        <TaskApp $w={33} $l={9} $bg="#2c333a"><Penguin l={0} /></TaskApp>
        <Icon w={24} h={18} l={8} c="#fff" sw={1.4}>
            <path d="M2 0v4M6 0v4M0 4h8v5c0 3-8 3-8 0zM4 11v6h3M9 4h13v12H7M23 8v4" /><path d="M10 6h10v8H10z" fill="#fff" />
        </Icon>
        <Icon w={19} h={24} l={13}><rect width="19" height="24" rx="9" fill="#0c7fe0" stroke="none" /><path d="M5 8l9 8-4.500 4V4L14 8l-9 8" stroke="#fff" /></Icon>
        <Icon w={19} h={26} l={20} c="#e6e8ea" sw={1.3}><path d="M3 8V1h9v7M1 8h12v16H1zM6 4h1M9 4h1M11 20l3 4 5-7" /></Icon>
        <Icon w={25} h={24} l={11}>
            <circle cx="12.500" cy="12" r="12" fill="#f6d724" stroke="none" /><path d="M1 9A12 12 0 0 1 24 9c-3-5-8-3-12-4S3 4 1 9zM2 17c5 4 7 3 11 2s7-2 11-2a12 12 0 0 1-22 0z" fill="#4db33d" stroke="none" />
            <path d="M12.500 6v12M6.500 12h12" stroke="#1e9b36" strokeWidth="4" />
        </Icon>
        <Icon w={24} h={20} l={12} c="#eee" sw={1.3}><path d="M1 7h4l5-6v18l-5-6H1zM13 7c2 2 2 4 0 6M16 4c4 4 4 8 0 12M19 1c6 6 6 12 0 18" /></Icon>
        <Icon w={19} h={22} l={14} c="#fff" sw={1.8}><path d="M1 6h17v9H1zM9.500 0v22" /></Icon>
        <Icon w={24} h={24} l={22}><rect width="24" height="24" rx="4" fill="#4393fb" stroke="none" /><ellipse cx="12" cy="12" rx="6" ry="7" stroke="#fff" strokeWidth="2.500" /><circle cx="18" cy="18" r="2.200" fill="#8ee04b" stroke="none" /></Icon>
        <Two $w={96} $l={24}>14:23 周五<br />2022/9/16</Two>
        <Icon w={38} h={34} l={26}>
            <path d="M0 5h24v21H0z" fill="#fff" stroke="none" /><path d="M9 10l6 5-6 5z" fill="#222" stroke="none" />
            <path d="M16 16h20v20H16z" fill="#e60012" stroke="none" />
            <text x="26" y="31" fontSize="13" fill="#fff" stroke="none" textAnchor="middle">6</text>
        </Icon>
        <Rule $h={60} $l={6} $c="#6c6c6c" />
    </Taskbar>
)

const App = () => (
    <>
        <GlobalStyle />
        <Screen>
            <TopTabs />
            <Menu />
            <RibbonBar />
            <RulerBar />
            <Body>
                <DocArea />
                <ScrollBar />
                <SideBar />
            </Body>
            <StatusBar />
            <TaskBar />
            <Meter><Bars /></Meter>
            <Peek />
            <Pointer width="13" height="19" viewBox="0 0 13 19">
                <path d="M.7 1v14.500l3.400-3 2.300 5 2.500-1-2.200-5H12z" fill="#fff" stroke="#000" strokeWidth="1.200" />
            </Pointer>
        </Screen>
    </>
)

export default App
